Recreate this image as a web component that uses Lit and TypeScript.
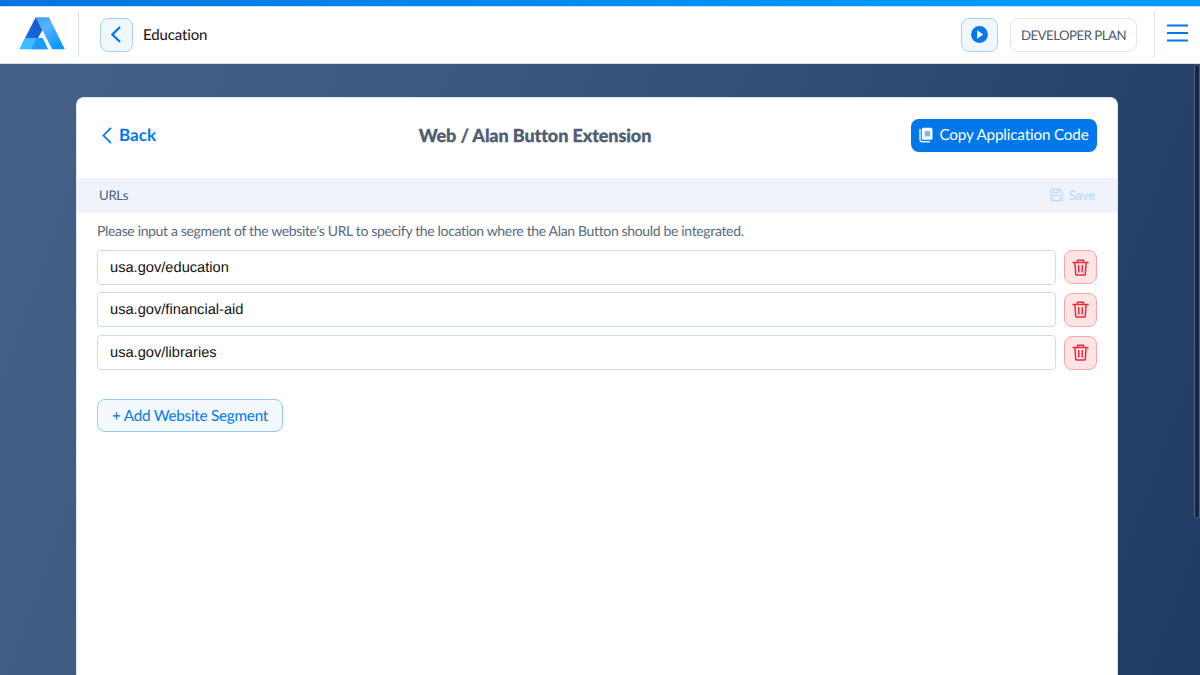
import { LitElement, html, css, svg } from "lit";
import { customElement, state } from "lit/decorators.js";

const logo = svg`
  <svg class="logo" width="46" height="33" viewBox="0 0 46 33">
    <defs>
      <linearGradient id="leg" x1="0" y1="0" x2="0.6" y2="1">
        <stop offset="0" stop-color="#3f9ff6" /><stop offset="0.4" stop-color="#55b3ff" /><stop offset="1" stop-color="#0d98ff" />
      </linearGradient>
      <linearGradient id="dark" x1="1" y1="0" x2="0" y2="1">
        <stop offset="0" stop-color="#1156c4" /><stop offset="1" stop-color="#1e72e6" />
      </linearGradient>
      <linearGradient id="base" x1="0.6" y1="0" x2="0" y2="1">
        <stop offset="0" stop-color="#46b4ff" /><stop offset="1" stop-color="#35c0ff" />
      </linearGradient>
    </defs>
    <path d="M16.5 0.3H30L45.8 32.2H33.2Z" fill="url(#leg)" />
    <path d="M16.7 0.3L23.3 13.3L17.6 23.5L12 30L3 27Z" fill="url(#dark)" />
    <path d="M6.2 21H23.6L29 32.2H0.2Z" fill="url(#base)" />
    <path d="M17.8 21H23.6L29 32.2H12.2Z" fill="#1a9cf8" />
  </svg>`;

const trash = svg`
  <svg width="17" height="17" viewBox="0 0 17 17" fill="none" stroke="#f0283c" stroke-width="1.5" stroke-linecap="round" stroke-linejoin="round">
    <path d="M1 3.4H16M5.5 3V1.2H11.5V3M2.9 3.6L3.7 15.2Q3.8 16.1 4.7 16.1H12.3Q13.2 16.1 13.3 15.2L14.1 3.6M6.6 6.4L6.9 12.9M10.4 6.4L10.1 12.9" />
  </svg>`;

@customElement("app-root")
export class AppRoot extends LitElement {
  @state() private urls = ["usa.gov/education", "usa.gov/financial-aid", "usa.gov/libraries"];

  static styles = css`
    :host {
      display: flex;
      flex-direction: column;
      position: relative;
      width: 1200px;
      height: 675px;
      overflow: hidden;
      box-sizing: border-box;
      font-family: Lato, sans-serif;
      font-variant-ligatures: none;
      text-rendering: geometricPrecision;
      background: linear-gradient(110deg, #456188 0%, #3b5880 35%, #2c476d 72%, #203b63 100%);
    }
    * { box-sizing: border-box; }
    svg { display: block; flex: none; }
    button { font: inherit; font-variant-ligatures: none; text-rendering: inherit; margin: 0; padding: 0; display: flex; align-items: center; justify-content: center; flex: none; }
    .stripe { height: 6px; flex: none; background: linear-gradient(90deg, #0073df, #0098ff 75%, #009dff); }
    .top { height: 58px; flex: none; display: flex; align-items: center; background: #fff; border-top: 1px solid #c6e2fb; border-bottom: 1px solid #d8dfe9; padding-bottom: 1px; }
    .logo { margin: -2px 13.5px 0 18.5px; }
    .rule { width: 1px; height: 47px; background: #dde3ec; }
    .sq { width: 33px; height: 34px; border: 1px solid #a6d0f8; border-radius: 8px; background: #f0f8ff; }
    .back-sq { margin-left: 21px; }
    .crumb { margin-left: 10px; font-size: 15px; line-height: 20px; color: #111; letter-spacing: -0.13px; }
    .grow { flex: 1; }
    .play { width: 37px; }
    .plan { width: 127px; height: 34px; margin: 0 17px 0 12px; border: 1px solid #e0e3ee; border-radius: 8px; background: #fff; color: #4e5a6c; font-size: 13.2px; letter-spacing: -0.48px; }
    .menu { margin: -3px 12.5px 0 11.5px; }
    .card { flex: 1; margin: 33px 82px 0 76px; background: #fff; border-radius: 8px 8px 0 0; display: flex; flex-direction: column; border: 1px solid #dfe6f0; border-bottom: 0; }
    .head { height: 80px; padding: 0 20px 5px 25px; display: flex; align-items: center; justify-content: space-between; }
    .back { display: flex; align-items: center; gap: 7px; color: #0078eb; font-weight: 700; font-size: 17px; }
    .back span { margin-top: -2px; }
    .title { font-size: 18px; font-weight: 900; color: #4e5d70; margin-left: 3px; margin-top: -1px; letter-spacing: -0.1px; -webkit-text-stroke: 0.3px #4e5d70; }
    .copy { width: 186px; height: 33px; border: 0; border-radius: 8px; background: #0078eb; color: #fff; font-size: 15.3px; letter-spacing: -0.2px; gap: 6px; padding-bottom: 1px; }
    .bar { height: 35px; flex: none; background: #f0f3f9; display: flex; align-items: center; justify-content: space-between; padding: 0 22px 1px; color: #4e6079; font-size: 13.2px; letter-spacing: -0.3px; }
    .save { display: flex; align-items: center; gap: 6px; color: #c1ddf8; font-weight: 700; }
    .body { padding: 8px 20px 0 20px; display: flex; flex-direction: column; align-items: flex-start; }
    .hint { font-size: 14px; letter-spacing: -0.346px; line-height: 20px; color: #5a697c; margin-bottom: 8.5px; white-space: nowrap; }
    .row { display: flex; width: 100%; align-items: center; gap: 8px; height: 35px; margin-bottom: 7.8px; }
    .field { flex: 1; min-width: 0; height: 35px; border: 1px solid #ccdcef; border-radius: 4px; padding: 1px 12px 0; font: 14.65px "Liberation Sans", Arial, sans-serif; text-rendering: inherit; color: #111; outline: none; background: #fff; }
    .del { width: 33px; height: 34px; border: 1px solid #fba5ab; border-radius: 8px; background: #fde4e5; }
    .add { width: 186px; height: 33px; margin-top: 21px; border: 1px solid #96c8f7; border-radius: 8px; background: #f3f9ff; color: #0078eb; font-size: 15.3px; letter-spacing: -0.26px; padding-top: 1px; }
    .scroll { position: absolute; right: 0; top: 64px; width: 6px; height: 455px; border: 1px solid #526176; border-radius: 3px; background: #152748; }
  `;

  render() {
    return html`
      <div class="stripe"></div>
      <header class="top">
        ${logo}
        <div class="rule"></div>
        <button class="sq back-sq">
          <svg width="11" height="17" viewBox="0 0 11 17" fill="none" stroke="#0078eb" stroke-width="2.2"><path d="M9 1L1.4 8.5L9 16" /></svg>
        </button>
        <div class="crumb">Education</div>
        <div class="grow"></div>
        <button class="sq play">
          <svg width="17" height="17" viewBox="0 0 17 17"><circle cx="8.5" cy="8.5" r="8.4" fill="#0078eb" /><path d="M6.2 4.2L12.2 8.5L6.2 12.8Z" fill="#fff" /></svg>
        </button>
        <button class="plan">DEVELOPER PLAN</button>
        <div class="rule"></div>
        <svg class="menu" width="21" height="18" viewBox="0 0 21 18" stroke="#0078eb" stroke-width="2"><path d="M0 1.5H21M0 9H21M0 16.5H21" /></svg>
      </header>
      <main class="card">
        <div class="head">
          <div class="back">
            <svg width="10" height="17" viewBox="0 0 10 17" fill="none" stroke="#0078eb" stroke-width="1.7"><path d="M9 0.8L1.4 8.5L9 16.2" /></svg>
            <span>Back</span>
          </div>
          <div class="title">Web / Alan Button Extension</div>
          <button class="copy">
            <svg width="14" height="16" viewBox="0 0 14 16">
              <path d="M1 2.5V12.5Q1 14.7 3.2 14.7H10.3" fill="none" stroke="#e4f1fd" stroke-width="1.5" stroke-linecap="round" />
              <rect x="2.8" y="0.8" width="10.7" height="12" rx="1.6" fill="#fff" />
              <rect x="5.8" y="4" width="5.2" height="5.4" fill="#79b6f4" />
            </svg>
            <span>Copy Application Code</span>
          </button>
        </div>
        <div class="bar">
          <span>URLs</span>
          <div class="save">
            <svg width="13" height="14" viewBox="0 0 13 14" fill="none" stroke="#c1ddf8" stroke-width="1.3" stroke-linejoin="round">
              <path d="M0.8 1.2H9.5L12.2 3.9V12.7H0.8ZM3.2 1.2V4.7H8.8V1.2M3 12.7V7.3H10V12.7M6.9 1.8V3.3" />
            </svg>
            <span>Save</span>
          </div>
        </div>
        <div class="body">
          <div class="hint">Please input a segment of the website's URL to specify the location where the Alan Button should be integrated.</div>
          ${this.urls.map((url) => html`
            <div class="row">
              <input class="field" .value=${url} />
              <button class="del">${trash}</button>
            </div>`)}
          <button class="add">+ Add Website Segment</button>
        </div>
      </main>
      <div class="scroll"></div>
    `;
  }
}
